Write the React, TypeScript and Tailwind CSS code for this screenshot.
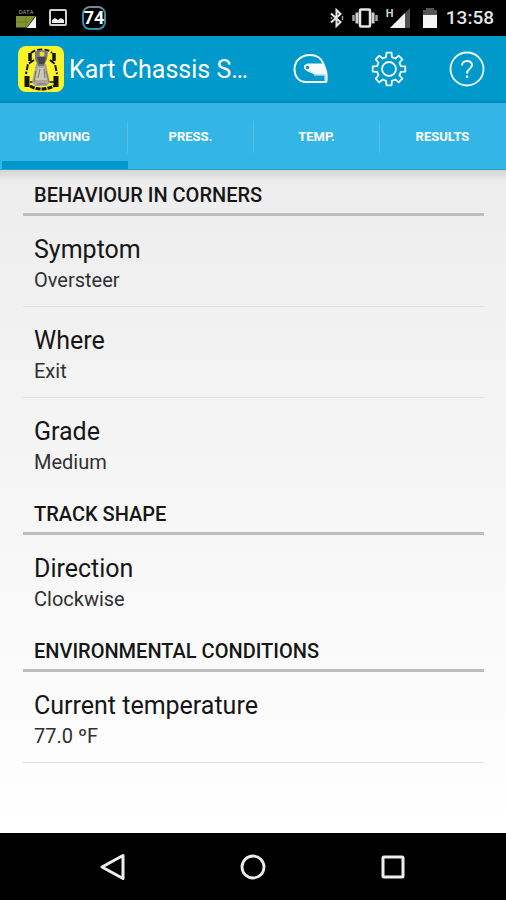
import { useState } from "react";
import type { ReactNode } from "react";

type Preference = { title: string; value: string };
type Section = { heading: string; items: Preference[] };

const tabs = ["DRIVING", "PRESS.", "TEMP.", "RESULTS"];

const sections: Section[] = [
  {
    heading: "BEHAVIOUR IN CORNERS",
    items: [
      { title: "Symptom", value: "Oversteer" },
      { title: "Where", value: "Exit" },
      { title: "Grade", value: "Medium" },
    ],
  },
  { heading: "TRACK SHAPE", items: [{ title: "Direction", value: "Clockwise" }] },
  {
    heading: "ENVIRONMENTAL CONDITIONS",
    items: [{ title: "Current temperature", value: "77.0 ºF" }],
  },
];

function StatusBar() {
  return (
    <div className="flex h-9 shrink-0 items-center justify-between bg-black pr-3 pl-4 text-white">
      <div className="flex items-center gap-3">
        <div className="flex w-5 flex-col items-center gap-px">
          <span className="text-[6px] leading-[7px] text-neutral-400">DATA</span>
          <svg width="20" height="12" viewBox="0 0 20 12" aria-hidden="true">
            <path d="M0 0H19L11 11.500H0Z" fill="#809332" />
            <path d="M20 0V12H11Z" fill="#f5f5f5" />
            <path d="M0 6H12M10 0V10" stroke="#6b7d2a" strokeWidth="1" />
          </svg>
        </div>
        <svg width="20" height="20" viewBox="0 0 20 20" aria-hidden="true">
          <rect x="2" y="2" width="16" height="15" rx="1" fill="none" stroke="#d0d0d0" strokeWidth="2" />
          <path d="M4 15V12L7 10L10 12L13 10L16 12V15Z" fill="#f0f0f0" />
        </svg>
        <div className="ml-0.5 flex size-6 items-center justify-center rounded-lg border-2 border-[#2f93b8] border-t-[#79898f] text-[18px] leading-5 font-bold">
          74
        </div>
      </div>
      <div className="flex items-center gap-2">
        <svg width="14" height="20" viewBox="0 0 14 20" fill="none" stroke="#e5e5e5" strokeWidth="2" aria-hidden="true">
          <path d="M1 5.500L10.500 14L6.500 18V2L10.500 6L1 14.500" />
          <path d="M12.500 8V12M1.500 9V11" stroke="#999" strokeWidth="1.500" />
        </svg>
        <svg width="26" height="20" viewBox="0 0 26 20" fill="none" aria-hidden="true">
          <rect x="8" y="1.500" width="10" height="17" rx="1" stroke="#e5e5e5" strokeWidth="2.500" />
          <path d="M5 4.500V15.500M21 4.500V15.500" stroke="#d0d0d0" strokeWidth="3" />
          <path d="M1.500 7V13M24.500 7V13" stroke="#a5a5a5" strokeWidth="2.500" />
        </svg>
        <div className="flex h-5 w-6 items-end">
          <span className="self-start text-[11px] leading-[11px] font-bold text-neutral-300">H</span>
          <svg className="-ml-1" width="20" height="20" viewBox="0 0 20 20" aria-hidden="true">
            <path d="M20 0V20H0Z" fill="#505050" />
            <path d="M15 5V20H0Z" fill="#f0f0f0" />
          </svg>
        </div>
        <svg className="ml-1" width="16" height="21" viewBox="0 0 16 21" aria-hidden="true">
          <path d="M4 2V0H12V2H15V7H1V2Z" fill="#555" />
          <path d="M1 7H15V20H1Z" fill="#f5f5f5" />
        </svg>
        <span className="text-[19px] leading-6 font-medium text-neutral-200">13:58</span>
      </div>
    </div>
  );
}

function KartLogo() {
  return (
    <svg className="shrink-0" width="46" height="46" viewBox="0 0 46 46" aria-hidden="true">
      <rect width="46" height="46" rx="8" fill="#f8f32b" />
      <g fill="none" stroke="#171510">
        <path d="M13 7Q17 3.500 24 3.500T34 7" strokeWidth="2" strokeDasharray="5 2" />
        <path d="M12 7V15M36 7V15" strokeWidth="3.500" />
        <path d="M16 14L10 18L8 28M32 14L37 18L39 28" strokeWidth="2" strokeDasharray="6 1.500" />
        <path d="M9 30V41M38 30V41" strokeWidth="5" />
        <path d="M12 40Q23 46 36 40" strokeWidth="3" strokeDasharray="5 1" />
        <path d="M12 36H17M30 36H36" strokeWidth="1.500" />
      </g>
      <path d="M18 18L28 18L32 36L29 40H17L14 36Z" fill="#aaa69a" />
      <path d="M20 22L26 22L29 34H17Z" fill="#cbc6ba" />
      <path d="M17 6Q23 2 30 6L29 13L26 20H20L17 13Z" fill="#77787f" />
      <path d="M19 11H28L26 18H21Z" fill="#45454c" />
      <circle cx="24" cy="8" r="2.500" fill="#f4d32e" />
      <path d="M18 25L16 36M28 25L31 36M19 38H28M22 23L20 32M26 23L27 32" stroke="#777369" strokeWidth="1" />
    </svg>
  );
}

function ActionButton({ label, children }: { label: string; children: ReactNode }) {
  return (
    <button type="button" aria-label={label} className="flex h-full w-[78px] items-center justify-center">
      <svg width="36" height="36" viewBox="0 0 36 36" fill="none" stroke="#f4fbff" strokeWidth="1.800" strokeLinejoin="round" aria-hidden="true">
        {children}
      </svg>
    </button>
  );
}

function gearOutline() {
  const teeth = 8;
  const points: string[] = [];
  for (let i = 0; i < teeth; i++) {
    const middle = (i * 360) / teeth - 90;
    const corners = [
      [-14, 12.2],
      [-9, 16.5],
      [9, 16.5],
      [14, 12.2],
    ];
    for (const [offset, radius] of corners) {
      const angle = ((middle + offset) * Math.PI) / 180;
      points.push(`${18 + radius * Math.cos(angle)},${18 + radius * Math.sin(angle)}`);
    }
  }
  return points.join(" ");
}

function AppBar() {
  return (
    <header className="flex h-[67px] shrink-0 items-center border-b-2 border-[#0789b8] bg-[#0099cc] pt-px pl-[18px] text-white">
      <KartLogo />
      <h1 className="ml-[5px] min-w-0 flex-1 truncate pt-0.5 text-[25px] leading-8">Kart Chassis S…</h1>
      <ActionButton label="Driver">
        <path
          d="M32.500 31H13C6 31 1.500 25.500 1.500 18.500C1.500 10 8 4 17 4C24 4 28.500 7.500 30.500 13L33 20Q34 25 33.500 30Q33.500 31 32.500 31Z"
          strokeWidth="2"
        />
        <path d="M33 23H22L13.500 19.500Q10.500 17.500 11.500 15Q12.500 13 15 13H30.500Z" fill="#f4fbff" strokeWidth="1" />
        <path d="M21 24H33M32 24V30" strokeWidth="1" />
        <circle cx="14.500" cy="16.500" r="1.800" fill="#0099cc" stroke="none" />
      </ActionButton>
      <ActionButton label="Settings">
        <polygon points={gearOutline()} />
        <circle cx="18" cy="18" r="7" />
      </ActionButton>
      <ActionButton label="Help">
        <circle cx="18" cy="18" r="16.500" />
        <path d="M13 14.500C13 8.500 23 8.500 23 14C23 18 18 17.500 18 22.500" strokeWidth="2" />
        <path d="M18 24.500V27" strokeWidth="2.200" />
      </ActionButton>
    </header>
  );
}

function NavigationBar() {
  return (
    <nav aria-label="System" className="flex h-[67px] shrink-0 items-center justify-center bg-black">
      <button type="button" aria-label="Back" className="flex h-full w-[140px] items-center justify-center">
        <svg width="28" height="28" viewBox="0 0 28 28" fill="none" stroke="#eeeeee" strokeWidth="3" strokeLinejoin="round">
          <path d="M3 14L24 2.500V25.500Z" />
        </svg>
      </button>
      <button type="button" aria-label="Home" className="flex h-full w-[140px] items-center justify-center">
        <svg width="28" height="28" viewBox="0 0 28 28" fill="none" stroke="#eeeeee" strokeWidth="2.800">
          <circle cx="14" cy="14" r="11" />
        </svg>
      </button>
      <button type="button" aria-label="Recent apps" className="flex h-full w-[140px] items-center justify-center">
        <svg width="28" height="28" viewBox="0 0 28 28" fill="none" stroke="#eeeeee" strokeWidth="3">
          <rect x="4" y="4" width="20" height="20" rx="1" />
        </svg>
      </button>
    </nav>
  );
}

export default function App() {
  const [active, setActive] = useState(0);

  return (
    <div className="flex min-h-screen flex-col bg-white font-[Roboto,sans-serif] text-[#161616]">
      <StatusBar />
      <AppBar />
      <div role="tablist" className="flex h-[67px] shrink-0 border-b border-[#2a9fc9] bg-[#33b5e5] pl-0.5 text-white">
        {tabs.map((tab, index) => (
          <button
            key={tab}
            type="button"
            role="tab"
            aria-selected={active === index}
            onClick={() => setActive(index)}
            className={`flex flex-1 items-center border-b-8 ${active === index ? "border-[#0099cc]" : "border-transparent"}`}
          >
            <span
              className={`mt-2.5 flex h-8 w-full items-center justify-center border-r text-[13px] font-bold ${
                index < tabs.length - 1 ? "border-[#51bfe8]" : "border-transparent"
              }`}
            >
              {tab}
            </span>
          </button>
        ))}
      </div>
      <main className="flex-1 bg-linear-to-b from-[#ededed] to-white">
        <div className="h-full bg-linear-to-b from-black/10 to-transparent to-[12px] pr-[22px] pl-[23px]">
          {sections.map((section, sectionIndex) => (
            <section key={section.heading}>
              <h2 className="flex h-[46px] items-center border-b-3 border-[#bdbdbd] px-[11px] pt-1.5 text-[20px] font-medium">
                {section.heading}
              </h2>
              {section.items.map((item, index) => {
                const last = index === section.items.length - 1 && sectionIndex < sections.length - 1;
                return (
                  <button
                    key={item.title}
                    type="button"
                    className={`flex h-[91px] w-full flex-col justify-center border-b px-[11px] pt-1.5 text-left ${
                      last ? "border-transparent" : "border-[#e0e0e0]"
                    }`}
                  >
                    <span className="text-[25px] leading-8">{item.title}</span>
                    <span className="text-[20px] leading-7 text-[#303030]">{item.value}</span>
                  </button>
                );
              })}
            </section>
          ))}
        </div>
      </main>
      <NavigationBar />
    </div>
  );
}
